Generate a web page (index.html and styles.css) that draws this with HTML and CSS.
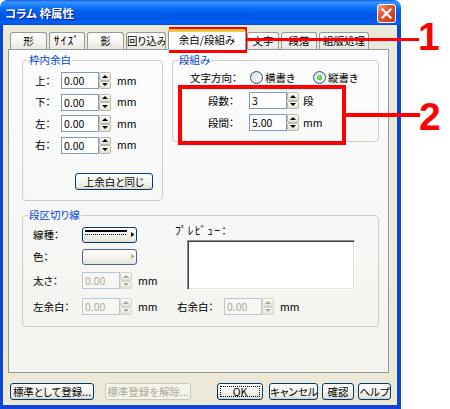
FILE: index.html
```html
<!DOCTYPE html>
<html lang="ja">
<head>
<meta charset="utf-8">
<title>コラム 枠属性</title>
<link rel="stylesheet" href="styles.css">
</head>
<body>
<div class="window">
  <div class="titlebar">
    <span class="title">コラム 枠属性</span>
    <span class="close"><svg width="11" height="11" viewBox="0 0 11 11"><path d="M1.5 1.5L9.5 9.5M9.5 1.5L1.5 9.5" stroke="#fff" stroke-width="2.2" stroke-linecap="square" fill="none"/></svg></span>
  </div>
  <div class="frame">
    <div class="tabs">
      <span class="tab tab-kei">形</span>
      <span class="tab tab-size"><span class="hw">ｻｲｽﾞ</span></span>
      <span class="tab tab-kage">影</span>
      <span class="tab tab-wrap">回り込み</span>
      <span class="tab tab-margin active">余白/段組み</span>
      <span class="tab tab-moji">文字</span>
      <span class="tab tab-para">段落</span>
      <span class="tab tab-kumi">組版処理</span>
    </div>
    <div class="panel">
      <div class="top-row">
        <fieldset class="group inner-margin">
          <legend>枠内余白</legend>
          <div class="body">
            <div class="rows">
              <div class="row"><span class="lbl">上：</span><span class="field">0.00</span><span class="spin"><i class="up"></i><i class="dn"></i></span><span class="unit">mm</span></div>
              <div class="row"><span class="lbl">下：</span><span class="field">0.00</span><span class="spin"><i class="up"></i><i class="dn"></i></span><span class="unit">mm</span></div>
              <div class="row"><span class="lbl">左：</span><span class="field">0.00</span><span class="spin"><i class="up"></i><i class="dn"></i></span><span class="unit">mm</span></div>
              <div class="row"><span class="lbl">右：</span><span class="field">0.00</span><span class="spin"><i class="up"></i><i class="dn"></i></span><span class="unit">mm</span></div>
            </div>
            <button class="btn same">上余白と同じ</button>
          </div>
        </fieldset>
        <fieldset class="group columns">
          <legend>段組み</legend>
          <div class="body">
            <div class="row dir-row">
              <span class="lbl-dir">文字方向：</span>
              <span class="option opt-h"><span class="radio"></span><span>横書き</span></span>
              <span class="option"><span class="radio on"></span><span>縦書き</span></span>
            </div>
            <div class="row col-row first"><span class="lbl-col">段数：</span><span class="field">3</span><span class="spin"><i class="up"></i><i class="dn"></i></span><span class="unit-col">段</span></div>
            <div class="row col-row"><span class="lbl-col">段間：</span><span class="field">5.00</span><span class="spin"><i class="up"></i><i class="dn"></i></span><span class="unit-col">mm</span></div>
          </div>
        </fieldset>
      </div>
      <fieldset class="group rule">
        <legend>段区切り線</legend>
        <div class="body">
          <div class="rule-top">
            <div class="rule-left">
              <div class="row r16"><span class="lbl-rule">線種：</span>
                <span class="pick"><svg width="53" height="14" viewBox="0 0 53 14"><rect x="2" y="2" width="42" height="2" fill="#000"/><path d="M2 6.5H44" stroke="#000" stroke-width="1" stroke-dasharray="1 1"/><path d="M48 4L51.5 6.5L48 9Z" fill="#000"/></svg></span>
              </div>
              <div class="row r16 gap6"><span class="lbl-rule">色：</span>
                <span class="pick pick-color"><svg width="53" height="14" viewBox="0 0 53 14"><path d="M48 4L51.5 6.5L48 9Z" fill="#ACA899"/></svg></span>
              </div>
              <div class="row gap7"><span class="lbl-rule">太さ：</span><span class="field off">0.00</span><span class="spin off"><i class="up"></i><i class="dn"></i></span><span class="unit">mm</span></div>
            </div>
            <div class="rule-right">
              <div class="lbl-preview"><span class="hw">ﾌﾟﾚﾋﾞｭｰ</span>：</div>
              <div class="preview"></div>
            </div>
          </div>
          <div class="row side-row">
            <span class="side left-side"><span class="lbl-rule">左余白：</span><span class="field off">0.00</span><span class="spin off"><i class="up"></i><i class="dn"></i></span><span class="unit">mm</span></span>
            <span class="side"><span class="lbl-right">右余白：</span><span class="field off">0.00</span><span class="spin off"><i class="up"></i><i class="dn"></i></span><span class="unit">mm</span></span>
          </div>
        </div>
      </fieldset>
    </div>
    <div class="footer">
      <button class="btn b-reg">標準として登録...</button>
      <button class="btn b-unreg" disabled>標準登録を解除...</button>
      <button class="btn b-ok">OK</button>
      <button class="btn b-cancel">キャンセル</button>
      <button class="btn b-check">確認</button>
      <button class="btn b-help">ヘルプ</button>
    </div>
  </div>
</div>

<!-- callouts drawn over the dialog -->
<div class="mark box1"></div>
<div class="mark line1"></div>
<div class="num n1">1</div>
<div class="mark box2"></div>
<div class="mark line2"></div>
<div class="num n2">2</div>
</body>
</html>
```

FILE: styles.css
```css
* { box-sizing: border-box; }
html, body { margin: 0; }

body {
  width: 450px;
  height: 409px;
  overflow: hidden;
  position: relative;
  background: #fff;
  color: #000;
  font-family: "Noto Sans CJK JP", sans-serif;
  font-size: 10.5px;
  line-height: 12px;
  font-feature-settings: "palt";
}

/* half-width katakana keep their fixed advance */
.hw {
  font-feature-settings: normal;
  font-size: 11.5px;
  letter-spacing: 1.2px;
}

/* ---------- window chrome ---------- */
.window {
  width: 401px;
  height: 409px;
  display: flex;
  flex-direction: column;
}

.titlebar {
  height: 25px;
  flex: none;
  display: flex;
  align-items: center;
  justify-content: space-between;
  padding: 0 5px 0 5px;
  border-radius: 7px 7px 0 0;
  background: linear-gradient(180deg, #0A5BE6 0px, #3D95FF 2px, #1F84FD 5px, #0669F5 9px, #0058E8 14px, #0055E5 19px, #0061F5 23px, #004AD8 25px);
}

.title {
  color: #fff;
  font-weight: bold;
  font-size: 11.5px;
  text-shadow: 1px 1px 0 #0E1B8A;
}

.close {
  width: 19px;
  height: 19px;
  align-self: flex-start;
  margin-top: 4px;
  display: flex;
  align-items: center;
  justify-content: center;
  border: 1px solid #fff;
  border-radius: 3px;
  background: linear-gradient(135deg, #F0A58C 0%, #E0603A 35%, #D24620 70%, #C23A16 100%);
}

.frame {
  flex: 1;
  background: #ECE9D8;
  border: solid #0A47D9;
  border-width: 0 4px 4px 3px;
}

/* ---------- tabs ---------- */
.tabs {
  display: flex;
  align-items: flex-end;
  height: 24px;
  padding-left: 7px;
}

.tab {
  height: 17px;
  margin-right: 2px;
  border: 1px solid #919B9C;
  border-bottom: 0;
  border-radius: 3px 3px 0 0;
  background: linear-gradient(#FFFFFF, #F4F4F0 60%, #E6E5DE);
  text-align: center;
  line-height: 15px;
  white-space: nowrap;
  overflow: hidden;
}

.tab-kei { width: 37px; }
.tab-size { width: 36px; }
.tab-kage { width: 37px; }
.tab-wrap { width: 40px; }
.tab-moji { width: 32px; }
.tab-para { width: 36px; }
.tab-kumi { width: 50px; }

.tab.active {
  width: 78px;
  height: 21px;
  margin-right: 1px;
  margin-bottom: -1px;
  position: relative;
  z-index: 1;
  border-top: 3px solid #FFC83C;
  background: #FCFCFE;
  line-height: 16px;
}

/* ---------- tab page ---------- */
.panel {
  margin-left: 5px;
  width: 381px;
  height: 324px;
  border: 1px solid #919B9C;
  background: linear-gradient(#FCFCFE, #F4F3EE);
  padding: 4px 0 0 13px;
}

.top-row {
  display: flex;
  align-items: flex-start;
}

.group {
  margin: 0;
  padding: 0;
  min-width: 0;
  border: 1px solid #D0D0BF;
  border-radius: 4px;
}

.group legend {
  margin-left: 5px;
  padding: 0 1px;
  color: #0046D5;
  line-height: 12px;
}

.row {
  display: flex;
  align-items: center;
  height: 17px;
}

.field {
  width: 38px;
  height: 17px;
  border: 1px solid #7F9DB9;
  background: #fff;
  padding-left: 2px;
  line-height: 15px;
}

.field.off {
  border-color: #B7C6DA;
  background: #F7F7F4;
  color: #ACA899;
}

/* up/down spinner */
.spin {
  width: 12px;
  height: 17px;
  display: flex;
  flex-direction: column;
}

.spin i {
  display: block;
  flex: 1;
  position: relative;
  border: 1px solid #BCB9A8;
  border-radius: 2px;
  background: linear-gradient(#FFFFFF, #E2E0D5);
}

.spin i::after {
  content: "";
  position: absolute;
  left: 50%;
  top: 50%;
  margin: -1.5px 0 0 -3px;
  border-style: solid;
}

.spin .up::after {
  border-width: 0 3px 3px;
  border-color: transparent transparent #000;
}

.spin .dn::after {
  border-width: 3px 3px 0;
  border-color: #000 transparent transparent;
}

.spin.off i { border-color: #D6D3C6; }
.spin.off .up::after { border-bottom-color: #ACA899; }
.spin.off .dn::after { border-top-color: #ACA899; }

.unit { margin-left: 6px; }

/* left group: inner margins */
.inner-margin {
  width: 141px;
  height: 147px;
}

.inner-margin .body { padding: 6px 0 0 12px; }

.rows {
  display: flex;
  flex-direction: column;
  gap: 4.5px;
}

.lbl { width: 26px; }

/* push buttons */
.btn {
  display: block;
  height: 17px;
  padding: 0;
  margin: 0;
  font: inherit;
  line-height: 15px;
  color: #000;
  text-align: center;
  white-space: nowrap;
  border: 1px solid #003C74;
  border-radius: 3px;
  background: linear-gradient(#FFFFFF, #F4F4F0 50%, #E9E7DE 85%, #D8D2C6);
}

.btn:disabled {
  color: #ACA899;
  border-color: #C9C7BA;
  background: #F5F4EA;
}

.same {
  width: 78px;
  margin: 19px 0 0 40px;
}

/* right group: columns */
.columns {
  width: 207px;
  height: 88px;
  margin-left: 9px;
}

.columns .body { padding: 3px 0 0 17px; }

.lbl-dir { width: 60px; }

.option {
  display: flex;
  align-items: center;
  gap: 2px;
}

.opt-h { width: 63px; }

.radio {
  width: 13px;
  height: 13px;
  border-radius: 50%;
  border: 1px solid #1C5180;
  background: linear-gradient(135deg, #DCDCD7, #FFFFFF);
  position: relative;
}

.radio.on::after {
  content: "";
  position: absolute;
  left: 3px;
  top: 3px;
  width: 5px;
  height: 5px;
  border-radius: 50%;
  background: radial-gradient(circle at 40% 40%, #8AF28A, #21A121);
}

.col-row { margin: 5px 0 0 18px; }
.col-row.first { margin-top: 6px; }
.lbl-col { width: 41px; }
.unit-col { margin-left: 4px; }

/* bottom group: column rule */
.rule {
  width: 357px;
  height: 118px;
  margin-top: 8px;
}

.rule .body { padding: 3px 0 0 10px; }

.rule-top { display: flex; }

.rule-left {
  width: 142px;
  padding-top: 3px;
  display: flex;
  flex-direction: column;
}

.r16 { height: 16px; }
.gap6 { margin-top: 6px; }
.gap7 { margin-top: 7px; }

.lbl-rule { width: 49px; }

.pick {
  width: 55px;
  height: 16px;
  border: 1px solid #003C74;
  border-radius: 3px;
  background: linear-gradient(#FFFFFF, #F2F1EC 60%, #E4E2D9);
  display: flex;
}

.pick-color { border-color: #45648F; }

.lbl-preview { line-height: 12px; }

.preview {
  width: 168px;
  height: 50px;
  margin: 3px 0 0 12px;
  background: #fff;
  border: 1px solid;
  border-color: #8E8E8A #FFFFFF #FFFFFF #8E8E8A;
  box-shadow: inset 1px 1px 0 #404040, inset -1px -1px 0 #E3E1D6;
}

.side-row { margin-top: 8px; }

.side { display: flex; align-items: center; }
.left-side { width: 144px; }
.lbl-right { width: 47px; }

/* ---------- dialog buttons ---------- */
.footer {
  display: flex;
  padding: 10px 0 0 7px;
}

.b-reg { width: 84px; margin-right: 11px; }
.b-unreg { width: 86px; margin-right: 26px; }
.b-ok {
  width: 46px;
  margin-right: 6px;
  outline: 1px dotted #000;
  outline-offset: -4px;
}
.b-cancel { width: 49px; margin-right: 4px; }
.b-check { width: 32px; margin-right: 4px; }
.b-help { width: 33px; }

/* ---------- red callouts ---------- */
.mark {
  position: absolute;
  border-color: #FF0000;
  border-style: solid;
}

.box1 { left: 169px; top: 27px; width: 78px; height: 26px; border-width: 3px; }
.line1 { left: 247px; top: 38px; width: 172px; height: 3px; border-width: 0; background: #FF0000; }
.box2 { left: 178px; top: 85px; width: 168px; height: 60px; border-width: 4px; }
.line2 { left: 346px; top: 113px; width: 74px; height: 4px; border-width: 0; background: #FF0000; }

.num {
  position: absolute;
  color: #FF0000;
  font-family: "Liberation Sans", Arial, sans-serif;
  font-weight: bold;
  font-size: 39px;
  line-height: 39px;
}

.n1 { left: 418px; top: 17px; }
.n2 { left: 419px; top: 97px; }
```
